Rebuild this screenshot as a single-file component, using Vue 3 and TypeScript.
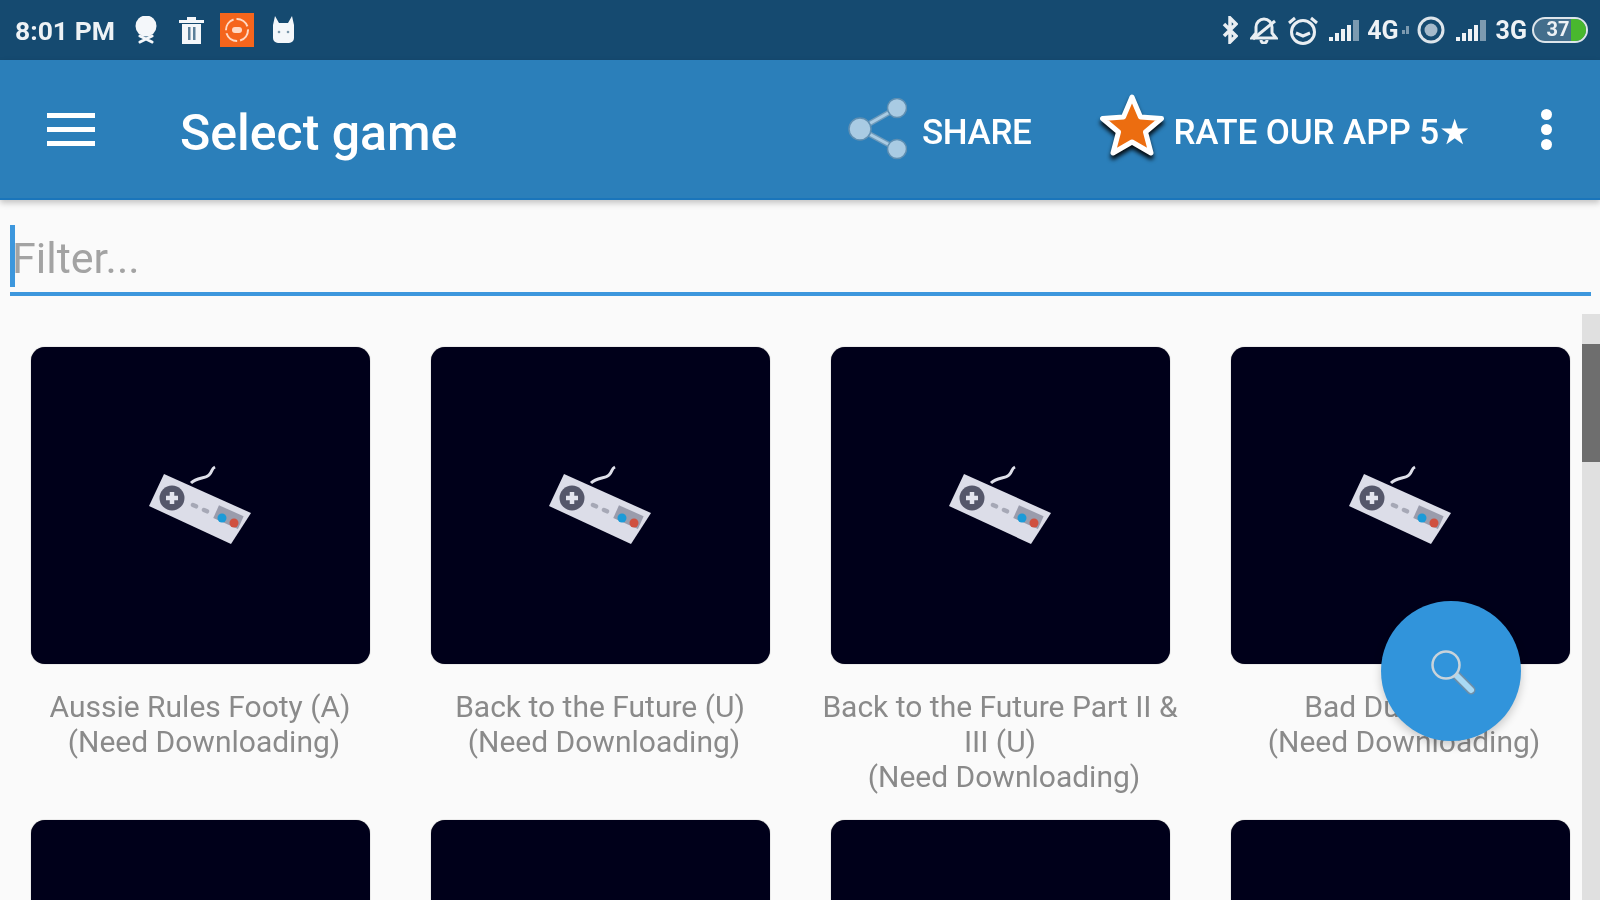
<template>
  <div class="app">
    <div class="status">
      <span class="status__time">8:01 PM</span>
      <svg class="status__icon" style="margin-left: 19px" width="24" height="28" viewBox="0 0 24 28">
        <circle cx="12" cy="10" r="10.5" fill="#f4f7fa" />
        <path d="M6 20 L18 26 M18 20 L6 26" stroke="#f4f7fa" stroke-width="3" stroke-linecap="round" />
      </svg>
      <svg class="status__icon" style="margin-left: 20px" width="27" height="28" viewBox="0 0 27 28">
        <path d="M1 4h25v3H1zM9 1h9v3H9z" fill="#f4f7fa" />
        <path d="M4 8h19v20H4z" fill="#f4f7fa" />
        <path d="M10 11h2.5v13H10zM15 11h2.500v13H15z" fill="#5b7f99" />
      </svg>
      <svg class="status__icon" style="margin-left: 15px" width="34" height="34" viewBox="0 0 34 34">
        <rect width="34" height="34" fill="#f5651c" />
        <circle cx="17" cy="17" r="11" fill="none" stroke="#ffd9c4" stroke-width="2" stroke-dasharray="14 3" />
        <rect x="12" y="14" width="10" height="6" rx="3" fill="#ffd9c4" />
      </svg>
      <svg class="status__icon" style="margin-left: 18px" width="23" height="28" viewBox="0 0 23 28">
        <path d="M3 0l4 7h9l4-7 2 9v13a5 5 0 0 1-5 5H6a5 5 0 0 1-5-5V9z" fill="#f4f7fa" />
        <circle cx="7" cy="16" r="1.300" fill="#7b97ab" />
        <circle cx="16" cy="16" r="1.300" fill="#7b97ab" />
      </svg>
      <div class="status__right">
        <svg width="16" height="28" viewBox="0 0 16 28">
          <path d="M2 8l12 12-6 6V2l6 6L2 20" fill="none" stroke="#e9eef2" stroke-width="3.500" />
        </svg>
        <svg style="margin-left: 12px" width="28" height="28" viewBox="0 0 28 28">
          <path d="M14 3a8 8 0 0 1 8 8v6l4 5H2l4-5v-6a8 8 0 0 1 8-8zM11 24a3 3 0 0 0 6 0" fill="none" stroke="#e9eef2" stroke-width="3" />
          <path d="M3 23L25 5" stroke="#e9eef2" stroke-width="3" />
        </svg>
        <svg style="margin-left: 10px" width="30" height="29" viewBox="0 0 30 29">
          <circle cx="15" cy="16" r="11.500" fill="none" stroke="#e9eef2" stroke-width="3" />
          <path d="M8 17l7 3 7-3M1 7l6-5M29 7l-6-5" fill="none" stroke="#e9eef2" stroke-width="3" />
        </svg>
        <svg style="margin-left: 11px" width="32" height="22" viewBox="0 0 32 22">
          <path d="M0 18h4v4H0zM6 14h4v8H6zM12 10h4v12h-4zM18 6h4v16h-4z" fill="#eef2f5" />
          <path d="M24 1h6v21h-6z" fill="#7c9ab0" />
        </svg>
        <span class="status__net" style="margin-left: 6px">4G</span>
        <svg style="margin-left: 3px" width="7" height="8" viewBox="0 0 7 8"><path d="M0 4h3v4H0zM4 0h3v8H4z" fill="#7c9ab0" /></svg>
        <svg style="margin-left: 8px" width="28" height="28" viewBox="0 0 28 28">
          <circle cx="14" cy="14" r="12" fill="none" stroke="#dde5eb" stroke-width="3" />
          <circle cx="14" cy="14" r="6.500" fill="#a5bacb" />
        </svg>
        <svg style="margin-left: 11px" width="32" height="22" viewBox="0 0 32 22">
          <path d="M0 18h4v4H0zM6 14h4v8H6zM12 10h4v12h-4zM18 6h4v16h-4z" fill="#eef2f5" />
          <path d="M24 1h6v21h-6z" fill="#7c9ab0" />
        </svg>
        <span class="status__net" style="margin-left: 8px">3G</span>
        <div class="battery">
          <span class="battery__level">37</span>
          <span class="battery__fill"></span>
        </div>
      </div>
    </div>

    <header class="bar">
      <button class="bar__menu" aria-label="Menu">
        <span></span><span></span><span></span>
      </button>
      <h1 class="bar__title">Select game</h1>
      <div class="bar__actions">
        <svg width="59" height="62" viewBox="-1 0 59 62">
          <path d="M11 31L48 10M11 31L48 51" stroke="#6f9bbb" stroke-width="5.500" />
          <path d="M11 31L48 10M11 31L48 51" stroke="#a9cbe3" stroke-width="3" />
          <circle cx="11" cy="31" r="11" fill="#a9cbe3" stroke="#5f8fb2" stroke-width="1.500" />
          <circle cx="48" cy="10" r="9.500" fill="#a9cbe3" stroke="#5f8fb2" stroke-width="1.500" />
          <circle cx="48" cy="51" r="9.500" fill="#a9cbe3" stroke="#5f8fb2" stroke-width="1.500" />
        </svg>
        <span class="bar__action bar__action--share">SHARE</span>
        <svg class="bar__star" width="66" height="68" viewBox="0 0 66 68">
          <path d="M33 4l8.500 20 21 1.500-16 13.500L52 60 33 49 14 60l5.500-21-16-13.500 21-1.500z" fill="#ec6d10" stroke="#fff" stroke-width="5" stroke-linejoin="round" />
        </svg>
        <span class="bar__action bar__action--rate">RATE OUR APP 5★</span>
      </div>
      <button class="bar__more" aria-label="More">
        <span></span><span></span><span></span>
      </button>
    </header>

    <label class="filter">
      <span class="filter__caret"></span>
      <input class="filter__input" placeholder="Filter..." />
    </label>

    <main class="list">
      <div class="grid">
        <div class="game" v-for="(game, i) in games" :key="i">
          <div class="game__thumb">
            <svg width="140" height="110" viewBox="0 0 140 110">
              <path d="M60 32C66 26 74 28 78 24C82 20 80 18 84 16" fill="none" stroke="#dfe0ea" stroke-width="3" />
              <path d="M33 23L120 62 100 93 18 55z" fill="#dcdde8" />
              <circle cx="41" cy="47" r="12.500" fill="#55576a" />
              <path d="M41 41v12M35 47h12" stroke="#e4e5ee" stroke-width="4.500" />
              <path d="M62 54l3 1.300M73 59l3 1.300" stroke="#a6a8b6" stroke-width="4.500" stroke-linecap="round" />
              <rect x="84" y="59" width="27" height="14" transform="rotate(24 97 66)" fill="#9a9cac" />
              <circle cx="91" cy="67" r="4.500" fill="#1b9bd8" />
              <circle cx="103" cy="72" r="4.500" fill="#d0503f" />
            </svg>
          </div>
          <div class="game__title" v-if="game">
            {{ game }}
            <br />
            <span class="game__note">(Need Downloading)</span>
          </div>
        </div>
      </div>

      <div class="scrollbar"><div class="scrollbar__thumb"></div></div>

      <button class="fab" aria-label="Search">
        <svg width="50" height="50" viewBox="0 0 50 50">
          <path d="M27 26L43 42" stroke="#6f8fa8" stroke-width="9" stroke-linecap="round" />
          <path d="M27 26L43 42" stroke="#a9daf5" stroke-width="6" stroke-linecap="round" />
          <circle cx="18" cy="17" r="13.500" fill="#3194db" stroke="#c9d3da" stroke-width="2.500" />
        </svg>
      </button>
    </main>
  </div>
</template>

<script setup lang="ts">
const games: string[] = [
  "Aussie Rules Footy (A)",
  "Back to the Future (U)",
  "Back to the Future Part II & III (U)",
  "Bad Dudes (U)",
  "",
  "",
  "",
  "",
];
</script>

<style>
html,
body {
  margin: 0;
  background: #fafafa;
}
</style>

<style scoped>
.app {
  height: 900px;
  overflow: hidden;
  display: flex;
  flex-direction: column;
  background: #fafafa;
  font-family: Roboto, "Liberation Sans", sans-serif;
  filter: blur(0.7px);
}

.status {
  height: 60px;
  flex: none;
  display: flex;
  align-items: center;
  padding: 0 12px 0 15px;
  box-sizing: border-box;
  background: #154a70;
  color: #eef2f5;
}

.status__time {
  font-size: 26.5px;
  font-weight: 700;
  width: 100px;
  white-space: nowrap;
}

.status__right {
  margin-left: auto;
  display: flex;
  align-items: center;
}

.status__net {
  font-size: 25px;
  font-weight: 700;
}

.battery {
  position: relative;
  width: 56px;
  height: 26px;
  margin-left: 5px;
  box-sizing: border-box;
  border: 2.5px solid #dde5eb;
  border-radius: 13px;
  overflow: hidden;
  background: rgba(255, 255, 255, 0.2);
  font-size: 20px;
  font-weight: 700;
  line-height: 21px;
  text-align: center;
}

.battery__level {
  position: relative;
  z-index: 1;
  margin-left: -4px;
}

.battery__fill {
  position: absolute;
  right: 0;
  top: 0;
  bottom: 0;
  width: 15px;
  background: #49b82e;
}

.bar {
  height: 140px;
  flex: none;
  display: flex;
  align-items: center;
  box-sizing: border-box;
  padding: 0 0 0 47px;
  background: #2b7fba;
  border-bottom: 2px solid #1a75bb;
  box-shadow: 0 3px 6px rgba(0, 0, 0, 0.22);
  color: #fff;
  position: relative;
  z-index: 1;
}

.bar__menu {
  width: 48px;
  height: 33px;
  padding: 0;
  border: 0;
  background: none;
  display: flex;
  flex-direction: column;
  justify-content: space-between;
}

.bar__menu span {
  height: 5px;
  background: #fff;
}

.bar__title {
  margin: 0 0 0 85px;
  padding-top: 7px;
  font-size: 50px;
  font-weight: 500;
  line-height: 1;
}

.bar__actions {
  margin-left: auto;
  display: flex;
  align-items: center;
}

.bar__action {
  padding-top: 6px;
  font-size: 35px;
  font-weight: 500;
  white-space: nowrap;
}

.bar__action--share {
  margin-left: 15px;
  letter-spacing: -0.4px;
}

.bar__star {
  margin-left: 68px;
  margin-top: -4px;
  filter: drop-shadow(0 4px 2px rgba(0, 0, 0, 0.9));
}

.bar__action--rate {
  margin-left: 8px;
  letter-spacing: -0.1px;
}

.bar__more {
  width: 12px;
  height: 41px;
  margin: 0 48px 0 70px;
  padding: 0;
  border: 0;
  background: none;
  display: flex;
  flex-direction: column;
  justify-content: space-between;
  align-items: center;
}

.bar__more span {
  width: 11px;
  height: 11px;
  border-radius: 50%;
  background: #fff;
}

.filter {
  height: 96px;
  flex: none;
  box-sizing: border-box;
  margin: 0 9px 0 10px;
  padding-top: 25px;
  display: flex;
  align-items: flex-start;
  border-bottom: 4px solid #3d97dd;
}

.filter__caret {
  width: 5px;
  height: 62px;
  flex: none;
  background: #3d97dd;
}

.filter__input {
  flex: 1;
  min-width: 0;
  box-sizing: border-box;
  height: 66px;
  margin-left: -3px;
  padding: 0;
  border: 0;
  outline: 0;
  background: none;
  font-family: inherit;
  font-size: 43px;
}

.filter__input::placeholder {
  color: #a3a3a3;
}

.list {
  flex: 1;
  min-height: 0;
  position: relative;
  padding-top: 51px;
}

.grid {
  display: grid;
  grid-template-columns: repeat(4, 400px);
}

.game {
  padding: 0 12px;
  box-sizing: border-box;
}

.game__thumb {
  height: 317px;
  margin: 0 18px 0 19px;
  display: flex;
  align-items: center;
  justify-content: center;
  background: #00001a;
  border-radius: 14px;
  box-shadow: 0 0 1px rgba(0, 0, 0, 0.6);
}

.game__title {
  min-height: 105px;
  margin-top: 25px;
  padding-bottom: 26px;
  font-size: 30px;
  line-height: 35px;
  text-align: center;
  color: #8a8a8a;
}

.game__note {
  padding-left: 8px;
}

.scrollbar {
  position: absolute;
  right: 0;
  top: 18px;
  bottom: 0;
  width: 18px;
  background: #e0e0e0;
}

.scrollbar__thumb {
  height: 118px;
  margin-top: 30px;
  background: #6e6e6e;
}

.fab {
  position: absolute;
  left: 1381px;
  top: 305px;
  width: 140px;
  height: 140px;
  padding: 4px 0 0 4px;
  border: 0;
  border-radius: 50%;
  background: #3194db;
  box-shadow: 0 4px 10px rgba(0, 0, 0, 0.2);
  display: flex;
  align-items: center;
  justify-content: center;
}
</style>
